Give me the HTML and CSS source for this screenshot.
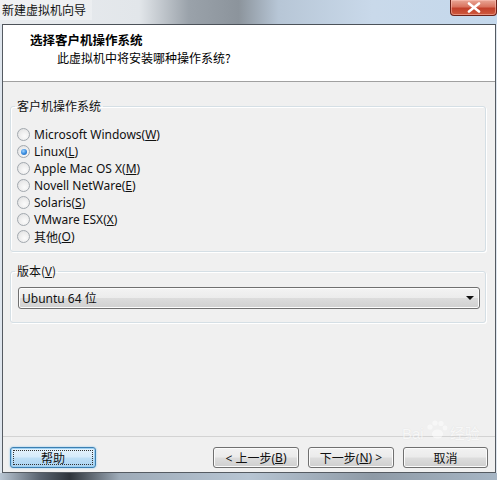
FILE: index.html
```html
<!DOCTYPE html>
<html>
<head>
<meta charset="utf-8">
<link rel="stylesheet" href="styles.css">
</head>
<body>
<div class="screen">
  <div class="titlebar">
    <span class="title">新建虚拟机向导</span>
    <div class="close">
      <svg width="14" height="11" viewBox="0 0 14 11"><path d="M2 1.5 L12 9.5 M12 1.5 L2 9.5" stroke="#fff" stroke-width="2.6" stroke-linecap="round"/></svg>
    </div>
  </div>
  <div class="frame">
    <div class="window">
      <div class="header">
        <div class="h-title">选择客户机操作系统</div>
        <div class="h-sub">此虚拟机中将安装哪种操作系统?</div>
      </div>
      <div class="content">
        <fieldset class="group group-os">
          <legend>客户机操作系统</legend>
          <div class="opt"><span class="radio"></span>Microsoft Windows(<u>W</u>)</div>
          <div class="opt"><span class="radio checked"></span>Linux(<u>L</u>)</div>
          <div class="opt"><span class="radio"></span>Apple Mac OS X(<u>M</u>)</div>
          <div class="opt"><span class="radio"></span>Novell NetWare(<u>E</u>)</div>
          <div class="opt"><span class="radio"></span>Solaris(<u>S</u>)</div>
          <div class="opt"><span class="radio"></span>VMware ESX(<u>X</u>)</div>
          <div class="opt"><span class="radio"></span>其他(<u>O</u>)</div>
        </fieldset>
        <fieldset class="group group-ver">
          <legend>版本(<u>V</u>)</legend>
          <div class="combo"><span class="combo-text">Ubuntu 64 位</span><span class="arrow"></span></div>
        </fieldset>
      </div>
      <div class="footer">
        <div class="btn btn-help"><span class="focus">帮助</span></div>
        <div class="spacer"></div>
        <div class="btn">&lt; 上一步(<u>B</u>)</div>
        <div class="btn">下一步(<u>N</u>) &gt;</div>
        <div class="btn">取消</div>
      </div>
    </div>
  </div>
  <div class="desk"></div>
  <div class="watermark">
    <span class="wm-text">Bai</span>
    <svg class="paw" width="24" height="20" viewBox="0 0 24 20"><circle cx="5" cy="7" r="2.6" fill="#fff"/><circle cx="10" cy="3" r="2.6" fill="#fff"/><circle cx="16" cy="3.5" r="2.6" fill="#fff"/><circle cx="20" cy="8" r="2.4" fill="#fff"/><ellipse cx="12.5" cy="14" rx="5.5" ry="4.5" fill="#fff"/></svg>
    <span class="wm-text">经验</span>
  </div>
</div>
</body>
</html>
```
FILE: styles.css
```css
* { box-sizing: border-box; }
html, body { margin: 0; padding: 0; }
body {
  font-family: "Noto Sans", "Noto Sans CJK SC", sans-serif;
  font-size: 12px;
  color: #000;
}
.screen {
  position: relative;
  width: 497px;
  height: 480px;
  overflow: hidden;
  background: #dfe6ee;
}
.titlebar {
  height: 24px;
  display: flex;
  align-items: flex-start;
  background: linear-gradient(90deg, #e9ecef 0%, #e2e6ea 28%, #9aa2aa 38%, #8c949c 48%, #b7c6d6 56%, #c9d9ea 75%, #c4d8ec 100%);
}
.title {
  padding-left: 2px;
  line-height: 20px;
  font-family: "Noto Sans CJK SC", sans-serif;
  color: #111;
  background: linear-gradient(90deg, rgba(240,242,244,0.9), rgba(240,242,244,0.6));
  padding-right: 6px;
}
.close {
  margin-left: auto;
  width: 47px;
  height: 16px;
  border: 1px solid #6b2118;
  border-top: none;
  border-radius: 0 0 4px 4px;
  background: linear-gradient(#e9a796 0%, #d9735f 45%, #c2402b 55%, #cf5a3e 100%);
  display: flex;
  align-items: center;
  justify-content: center;
  box-shadow: inset 0 0 0 1px rgba(255,200,190,0.5);
}
.frame {
  padding: 0 1px 0 2px;
}
.window {
  border: 1px solid #555b62;
  border-top-color: #4c5259;
  background: #f0f0f0;
}
.header {
  height: 57px;
  background: #fff;
  padding-top: 7px;
  border-bottom: 1px solid #a0a0a0;
  position: relative;
}
.header::after {
  content: "";
  position: absolute;
  left: 0; right: 0; bottom: 0;
  height: 1px;
  background: #fff;
}
.h-title {
  font-family: "Noto Sans CJK SC", sans-serif;
  font-weight: bold;
  line-height: 16px;
  padding-left: 27px;
  font-size: 12.5px;
}
.h-sub {
  font-family: "Noto Sans CJK SC", sans-serif;
  line-height: 16px;
  padding-left: 54px;
  margin-top: 2px;
}
.content {
  height: 355px;
  padding: 17px 9px 0 7px;
  border-bottom: 1px solid #d3d3d3;
}
.group {
  margin: 0;
  padding: 0 6px;
  border: 1px solid #d5dfe5;
  border-radius: 3px;
  box-shadow: inset 1px 1px 0 #fff, 1px 1px 0 #fff;
  min-width: 0;
}
.group legend {
  padding: 0 2px;
  margin-left: -2px;
  line-height: 14px;
  font-family: "Noto Sans CJK SC", sans-serif;
  color: #111;
}
.group-os {
  padding-top: 13px;
  padding-bottom: 6px;
}
.group-ver {
  margin-top: 12px;
  padding-top: 9px;
  padding-bottom: 13px;
}
.opt {
  height: 17px;
  display: flex;
  align-items: center;
  color: #111;
}
.radio {
  width: 13px;
  height: 13px;
  border-radius: 50%;
  border: 1px solid #a2a8ae;
  background: radial-gradient(circle at 60% 65%, #fbfbfb 0%, #ececec 55%, #d8dadc 100%);
  margin-right: 4px;
  display: flex;
  align-items: center;
  justify-content: center;
}
.radio.checked::before {
  content: "";
  width: 6px;
  height: 6px;
  border-radius: 50%;
  background: radial-gradient(circle at 40% 35%, #9fd3ff 0%, #3a8ee0 50%, #1d5aa8 100%);
}
u { text-decoration: underline; text-underline-offset: 1px; }
.combo {
  height: 22px;
  margin: 0 -1px 0 1px;
  border: 1px solid #707070;
  border-radius: 3px;
  background: linear-gradient(#f3f3f3 0%, #ececec 48%, #dcdcdc 52%, #d0d0d0 100%);
  box-shadow: inset 0 0 0 1px #fcfcfc;
  display: flex;
  align-items: center;
  padding: 0 4px 0 3px;
}
.combo-text {
  flex: 1;
  color: #111;
}
.arrow {
  width: 0;
  height: 0;
  border-left: 4px solid transparent;
  border-right: 4px solid transparent;
  border-top: 4px solid #111;
  margin-right: 1px;
}
.footer {
  height: 35px;
  display: flex;
  align-items: flex-start;
  padding: 10px 7px 0 7px;
  gap: 9px;
}
.spacer { flex: 1; }
.btn {
  width: 86px;
  height: 21px;
  border: 1px solid #707070;
  border-radius: 3px;
  background: linear-gradient(#f2f2f2 0%, #ebebeb 48%, #dddddd 52%, #cfcfcf 100%);
  box-shadow: inset 0 0 0 1px #fbfbfb;
  display: flex;
  align-items: center;
  justify-content: center;
  color: #111;
  font-family: "Noto Sans", "Noto Sans CJK SC", sans-serif;
}
.btn:last-child { width: 85px; }
.btn-help {
  border-color: #3c7fb1;
  background: linear-gradient(#e6f3fc 0%, #d6ebfb 48%, #bfdff6 52%, #a9d3f2 100%);
  box-shadow: inset 0 0 0 1px #9ed0f2, 0 0 2px #7fc0ee;
  padding: 2px;
}
.btn-help .focus {
  flex: 1;
  align-self: stretch;
  display: flex;
  align-items: center;
  justify-content: center;
  border: 1px dotted #333;
}
.desk {
  height: 7px;
  background: linear-gradient(90deg, #b9c6d3 0%, #5a6470 8%, #2e343b 14%, #9eabb8 24%, #b7c5d3 50%, #8e9aa6 75%, #a7b6c5 100%);
}
.watermark {
  position: absolute;
  left: 402px;
  top: 420px;
  opacity: 0.5;
  display: flex;
  align-items: flex-end;
  gap: 1px;
  pointer-events: none;
}
.paw { margin-bottom: 3px; }
.wm-text {
  color: #fff;
  font-size: 15px;
  line-height: 18px;
  font-family: "Liberation Sans", "Noto Sans CJK SC", sans-serif;
  text-shadow: 0 0 1px #ccc;
}
```
